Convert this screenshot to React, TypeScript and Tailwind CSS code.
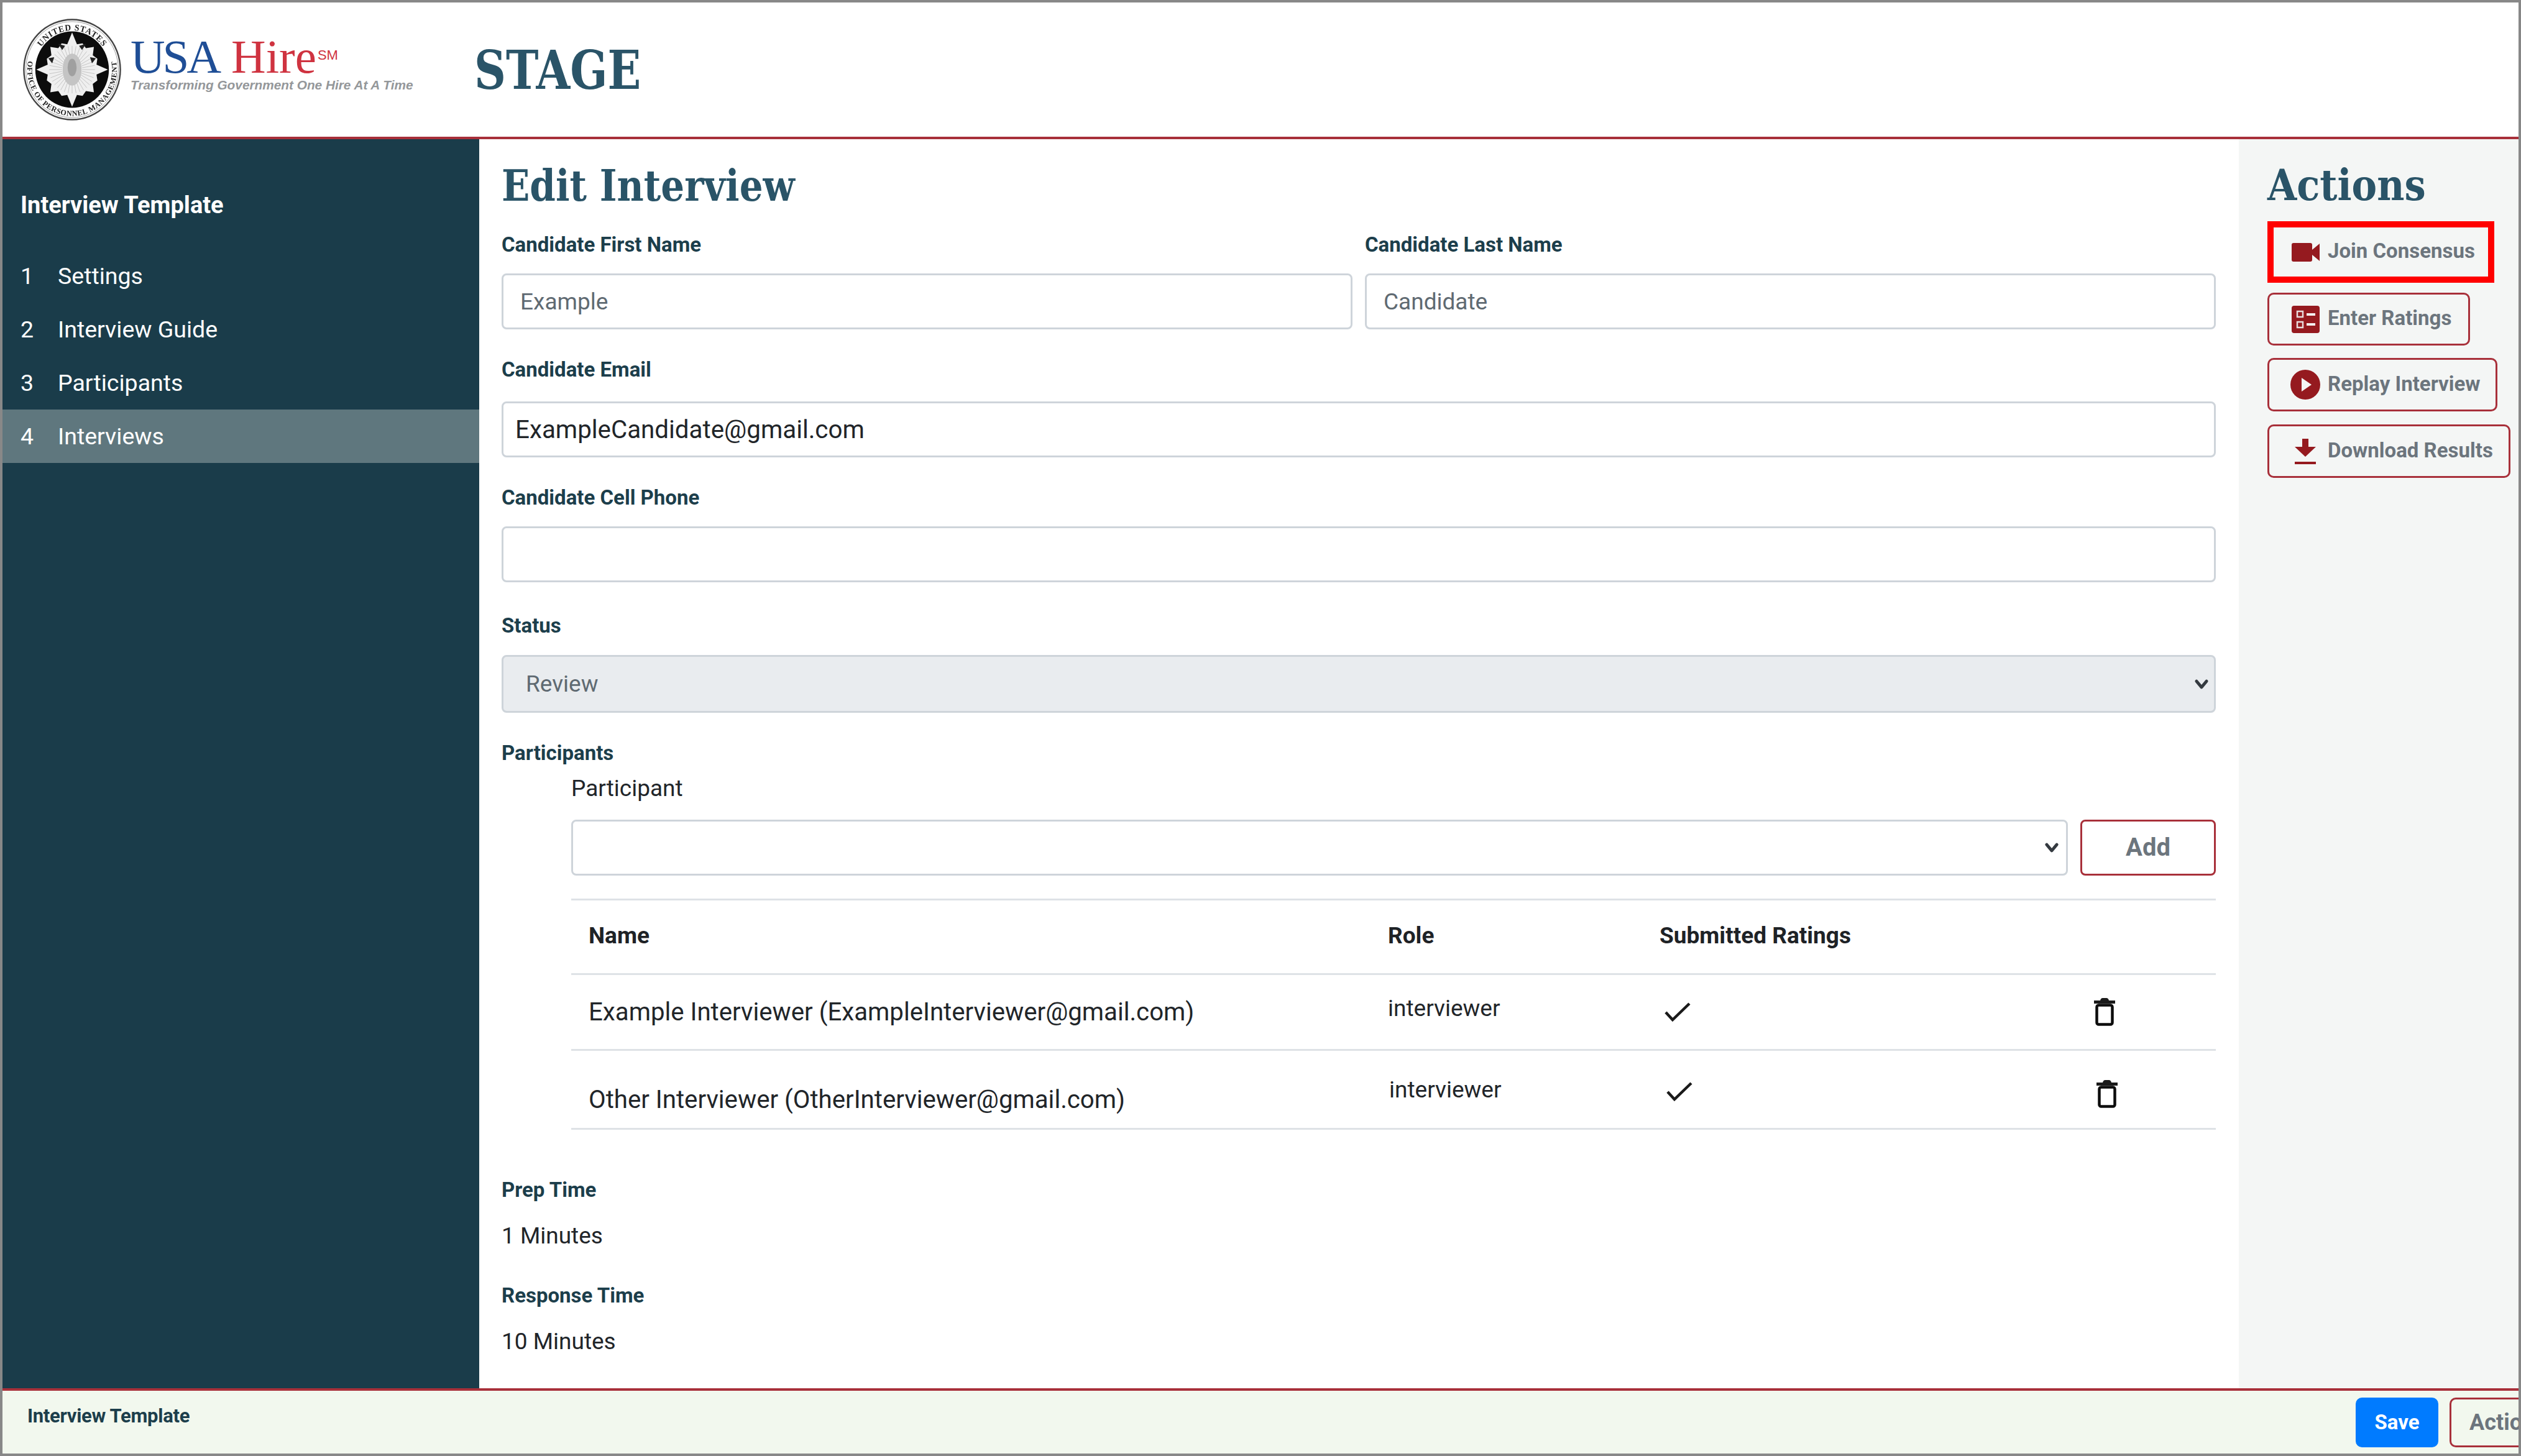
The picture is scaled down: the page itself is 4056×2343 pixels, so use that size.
import type { ReactNode } from "react";

const slab = "font-['DejaVu_Serif',serif] font-bold text-[#2a5468]";
const label = "h-[40px] flex items-center text-[33px] font-bold text-[#1c3e4b]";
const fieldBox =
  "block h-[90px] rounded-[8px] border-[3px] border-[#ced4da] bg-white text-[37px] outline-none";

function Chevron() {
  return (
    <svg viewBox="0 0 16 16" className="absolute right-[10px] top-1/2 h-[26px] w-[26px] -translate-y-1/2">
      <path d="M3 5l5 6 5-6" fill="none" stroke="#343a40" strokeWidth="3" strokeLinecap="round" strokeLinejoin="round" />
    </svg>
  );
}

function Seal() {
  const star = [];
  for (let i = 0; i < 32; i++) {
    const a = (i * Math.PI) / 16 - Math.PI / 2;
    const r = i % 8 === 0 ? 72 : i % 4 === 0 ? 62 : i % 2 === 0 ? 55 : 50;
    star.push(`${100 + r * Math.cos(a)},${100 + r * Math.sin(a)}`);
  }
  const rays = [];
  for (let i = 0; i < 36; i++) {
    const a = (i * Math.PI) / 18;
    rays.push(`M${100 + 20 * Math.cos(a)} ${100 + 20 * Math.sin(a)}L${100 + 46 * Math.cos(a)} ${100 + 46 * Math.sin(a)}`);
  }
  return (
    <svg viewBox="0 0 200 200" className="h-[166px] w-[160px] shrink-0 blur-[0.7px]" preserveAspectRatio="none">
      <circle cx="100" cy="100" r="97" fill="#fff" stroke="#444" strokeWidth="3" />
      <circle cx="100" cy="100" r="93" fill="none" stroke="#888" strokeWidth="1" />
      <circle cx="100" cy="100" r="74" fill="#0c0c0c" />
      <path id="sealTop" d="M24 100a76 76 0 0 1 152 0" fill="none" />
      <path id="sealBottom" d="M15.4 69.2a90 90 0 1 0 169.2 0" fill="none" />
      <text fontSize="17" fontFamily="'Liberation Serif',serif" fontWeight="700" fill="#222" letterSpacing="1">
        <textPath href="#sealTop" startOffset="50%" textAnchor="middle">UNITED STATES</textPath>
      </text>
      <text fontSize="15" fontFamily="'Liberation Serif',serif" fontWeight="700" fill="#222" letterSpacing="0.8">
        <textPath href="#sealBottom" startOffset="50%" textAnchor="middle">OFFICE OF PERSONNEL MANAGEMENT</textPath>
      </text>
      <polygon points={star.join(" ")} fill="#efefef" />
      <path d={rays.join("")} stroke="#c4c4c4" strokeWidth="1.2" />
      <path d="M72 50l14 4-6 8zM128 50l-14 4 6 8zM52 78l8 10 4-12zM148 78l-8 10-4-12z" fill="#222" />
      <ellipse cx="100" cy="100" rx="19" ry="31" fill="#c4c4c4" />
      <ellipse cx="100" cy="96" rx="9" ry="17" fill="#a0a0a0" />
    </svg>
  );
}

function VideoIcon() {
  return (
    <svg viewBox="0 0 45 30" className="h-[30px] w-[45px]">
      <rect x="0" y="0" width="33" height="30" rx="3" fill="#951a1f" />
      <path d="M33 11L45 1v28L33 19z" fill="#951a1f" />
    </svg>
  );
}

function RatingsIcon() {
  return (
    <svg viewBox="0 0 45 44" className="h-[44px] w-[45px]">
      <rect width="45" height="44" rx="4" fill="#951a1f" />
      <rect x="9" y="9" width="9" height="9" fill="none" stroke="#e8dcdc" strokeWidth="2.5" />
      <rect x="9" y="26" width="9" height="9" fill="none" stroke="#e8dcdc" strokeWidth="2.5" />
      <rect x="24" y="12" width="14" height="4" fill="#f4f0f0" />
      <rect x="24" y="28" width="14" height="4" fill="#f4f0f0" />
    </svg>
  );
}

function PlayIcon() {
  return (
    <svg viewBox="0 0 48 48" className="h-[48px] w-[48px]">
      <circle cx="24" cy="24" r="24" fill="#951a1f" />
      <path d="M18 13l16 11-16 11z" fill="#f4f6f5" />
    </svg>
  );
}

function DownloadIcon() {
  return (
    <svg viewBox="0 0 34 41" className="h-[41px] w-[34px]">
      <path d="M12 0h10v13h12L17 29 0 13h12z" fill="#951a1f" />
      <rect x="0" y="37" width="34" height="4" fill="#951a1f" />
    </svg>
  );
}

function CheckIcon() {
  return (
    <svg viewBox="0 0 42 31" className="h-[31px] w-[42px]">
      <path d="M2 16l11 12L40 2" fill="none" stroke="#1a1a1a" strokeWidth="4.5" />
    </svg>
  );
}

function TrashIcon() {
  return (
    <svg viewBox="0 0 34 45" className="h-[45px] w-[34px]">
      <path d="M10 4q1-4 4-4h6q3 0 4 4h10v5H0V4z" fill="#1a1a1a" />
      <rect x="4.5" y="11.5" width="25" height="31" rx="3" fill="none" stroke="#0d0d0d" strokeWidth="4.5" />
    </svg>
  );
}

function ActionBtn({ icon, text, className }: { icon: ReactNode; text: string; className: string }) {
  return (
    <button className={`flex items-center rounded-[10px] border-[3px] border-[#a8303a] pl-[34px] ${className}`}>
      <span className="flex w-[48px] shrink-0 items-center justify-center">{icon}</span>
      <span className="ml-[12px] whitespace-nowrap pb-[3px] text-[33px] font-bold text-[#6c757d]">{text}</span>
    </button>
  );
}

const participants = [
  { name: "Example Interviewer (ExampleInterviewer@gmail.com)", h: "h-[122px]", text: "pt-[2px]", role: "pb-[12px]", check: "pl-[8px]", trash: "" },
  { name: "Other Interviewer (OtherInterviewer@gmail.com)", h: "h-[127px]", text: "pt-[34px]", role: "pl-[2px] pt-[2px]", check: "pl-[11px] pt-[6px]", trash: "pl-[4px] pt-[14px]" },
];

export default function App() {
  return (
    <div className="flex h-[2343px] w-[4056px] flex-col overflow-hidden border-[4px] border-[#888888] bg-white font-['Roboto',sans-serif]">
      {/* Header */}
      <header className="flex h-[220px] shrink-0 items-center border-b-[4px] border-[#a8303a] pl-[32px]">
        <Seal />
        <div className="ml-[14px] w-[553px] pb-[16px]">
          <div className="flex items-start font-['Liberation_Serif',serif] text-[77px] leading-[64px]">
            <span className="tracking-[-4px] text-[#1f4e96]">USA</span>
            <span className="ml-[20px] text-[#cf3340]">Hire</span>
            <span className="ml-[2px] mt-[20px] font-['Liberation_Sans',sans-serif] text-[22px] leading-[20px] text-[#cf3340]">SM</span>
          </div>
          <div className="mt-[2px] font-['Liberation_Sans',sans-serif] text-[20.8px] font-bold italic leading-[24px] text-[#94979a]">
            Transforming Government One Hire At A Time
          </div>
        </div>
        <div className={`origin-left scale-x-[0.82] text-[86px] ${slab}`}>STAGE</div>
      </header>

      <div className="flex min-h-0 flex-1">
        {/* Sidebar */}
        <aside className="w-[767px] shrink-0 bg-[#1a3c4a] pt-[84px] text-white">
          <div className="pl-[29px] text-[38px] font-bold leading-[44px]">Interview Template</div>
          <nav className="mt-[49px] flex flex-col text-[37.5px]">
            {["Settings", "Interview Guide", "Participants", "Interviews"].map((item, i) => (
              <div key={item} className={`flex h-[86px] items-center pl-[29px] ${i === 3 ? "bg-[#5f777e]" : ""}`}>
                <span className="w-[60px]">{i + 1}</span>
                <span>{item}</span>
              </div>
            ))}
          </nav>
        </aside>

        {/* Form */}
        <main className="min-w-0 flex-1 pl-[36px] pr-[37px] text-[#212529]">
          <h1 className={`flex h-[148px] origin-left scale-x-[0.85] items-center text-[70px] ${slab}`}>Edit Interview</h1>

          <div className="flex gap-[20px]">
            <div className="flex-1">
              <div className={`mt-[2px] ${label}`}>Candidate First Name</div>
              <input readOnly value="Example" className={`mt-[26px] w-full pl-[27px] text-[#5f6a72] ${fieldBox}`} />
            </div>
            <div className="flex-1">
              <div className={`mt-[2px] ${label}`}>Candidate Last Name</div>
              <input readOnly value="Candidate" className={`mt-[26px] w-full pl-[27px] text-[#5f6a72] ${fieldBox}`} />
            </div>
          </div>

          <div className={`mt-[45px] ${label}`}>Candidate Email</div>
          <input readOnly value="ExampleCandidate@gmail.com" className={`mt-[31px] w-full pl-[19px] ${fieldBox} !text-[40.3px]`} />

          <div className={`mt-[45px] ${label}`}>Candidate Cell Phone</div>
          <input readOnly value="" className={`mt-[26px] w-full ${fieldBox}`} />

          <div className={`mt-[50px] ${label}`}>Status</div>
          <div className="relative mt-[27px]">
            <div className="flex h-[93px] items-center rounded-[8px] border-[3px] border-[#ced4da] bg-[#e9ecef] pl-[36px] text-[37px] text-[#5f6a72]">
              Review
            </div>
            <Chevron />
          </div>

          <div className={`mt-[45px] ${label}`}>Participants</div>
          <div className="ml-[112px]">
            <div className="mt-[17px] flex h-[40px] items-center text-[37px] text-[#212529]">Participant</div>
            <div className="mt-[30px] flex gap-[20px]">
              <div className={`relative w-[2408px] ${fieldBox}`}>
                <Chevron />
              </div>
              <button className="h-[90px] flex-1 rounded-[8px] border-[3px] border-[#a8303a] text-[40px] font-bold text-[#6c757d]">
                Add
              </button>
            </div>

            {/* Participants table */}
            <div className="mt-[37px] border-t-[3px] border-[#dee2e6]">
              <div className="grid h-[120px] grid-cols-[1314px_437px_699px_1fr] items-center border-b-[3px] border-[#dee2e6] pb-[4px] text-[37px] font-bold text-[#1e2226]">
                <div className="pl-[28px]">Name</div>
                <div>Role</div>
                <div>Submitted Ratings</div>
                <div />
              </div>
              {participants.map((p) => (
                <div key={p.name} className={`grid grid-cols-[1314px_437px_699px_1fr] items-center border-b-[3px] border-[#dee2e6] text-[37px] ${p.h}`}>
                  <div className={`pl-[28px] text-[40.2px] ${p.text}`}>{p.name}</div>
                  <div className={p.role}>interviewer</div>
                  <div className={`flex ${p.check}`}><CheckIcon /></div>
                  <div className={`flex ${p.trash}`}><TrashIcon /></div>
                </div>
              ))}
            </div>
          </div>

          <div className={`mt-[77px] ${label}`}>Prep Time</div>
          <div className="mt-[34px] flex h-[40px] items-center text-[37px]">1 Minutes</div>
          <div className={`mt-[56px] ${label}`}>Response Time</div>
          <div className="mt-[34px] flex h-[40px] items-center text-[37px]">10 Minutes</div>
        </main>

        {/* Actions */}
        <section className="w-[450px] shrink-0 bg-[#f4f6f5] pl-[46px]">
          <h2 className={`flex h-[132px] origin-left scale-x-[0.87] items-center pt-[14px] text-[70px] ${slab}`}>Actions</h2>
          <div className="flex h-[99px] w-[365px] items-center border-[10px] border-[#ff0000] pl-[27px]">
            <span className="flex w-[48px] shrink-0 items-center justify-center"><VideoIcon /></span>
            <span className="ml-[12px] whitespace-nowrap pb-[3px] text-[33px] font-bold text-[#6c757d]">Join Consensus</span>
          </div>
          <ActionBtn icon={<RatingsIcon />} text="Enter Ratings" className="mt-[16px] h-[85px] w-[326px]" />
          <ActionBtn icon={<PlayIcon />} text="Replay Interview" className="mt-[20px] h-[86px] w-[370px]" />
          <ActionBtn icon={<DownloadIcon />} text="Download Results" className="mt-[21px] h-[86px] w-[391px]" />
        </section>
      </div>

      {/* Footer */}
      <footer className="flex h-[105px] shrink-0 items-center border-t-[4px] border-[#a8303a] bg-[#f2f8ee] pl-[40px]">
        <div className="flex-1 pb-[18px] text-[31px] font-bold tracking-[-0.3px] text-[#1c3e4b]">Interview Template</div>
        <button className="h-[80px] w-[133px] rounded-[10px] bg-[#007bff] text-[33px] font-bold text-white">Save</button>
        <div className="ml-[18px] w-[111px] overflow-hidden">
          <button className="h-[80px] w-[180px] rounded-[10px] border-[3px] border-[#a8303a] pl-[29px] text-left text-[36px] font-bold text-[#6c757d]">
            Actions
          </button>
        </div>
      </footer>
    </div>
  );
}
